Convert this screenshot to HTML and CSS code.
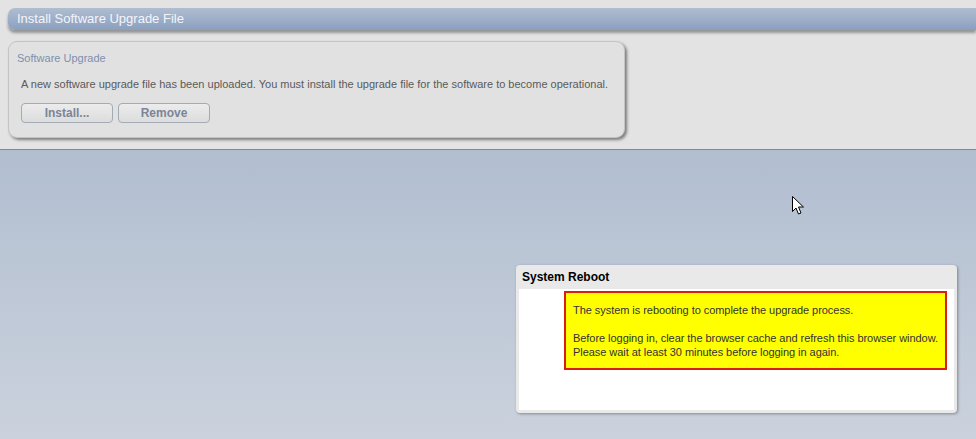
FILE: index.html
```html
<!DOCTYPE html>
<html lang="en">
<head>
    <meta charset="UTF-8">
    <title>Install Software Upgrade File</title>
    <link rel="stylesheet" href="styles.css">
</head>
<body>
    <!-- Upgrade section -->
    <section class="top-area">
        <div class="page-header">Install Software Upgrade File</div>
        <div class="panel">
            <h3 class="panel-title">Software Upgrade</h3>
            <p class="panel-text">A new software upgrade file has been uploaded. You must install the upgrade file for the software to become operational.</p>
            <div class="panel-buttons">
                <button class="btn">Install...</button>
                <button class="btn">Remove</button>
            </div>
        </div>
    </section>

    <section class="lower-area"></section>

    <!-- Reboot dialog -->
    <div class="dialog">
        <div class="dialog-title">System Reboot</div>
        <div class="dialog-body">
            <div class="notice">
                The system is rebooting to complete the upgrade process.<br><br>
                Before logging in, clear the browser cache and refresh this browser window.<br>
                Please wait at least 30 minutes before logging in again.
            </div>
        </div>
    </div>

    <svg class="cursor" width="13" height="20" viewBox="0 0 13 20">
        <path d="M0.5 0.5 L0.5 15.5 L4 12 L6.5 18 L9 17 L6.5 11 L11.5 11 Z" fill="#fff" stroke="#000" stroke-width="1"/>
    </svg>
</body>
</html>
```

FILE: styles.css
```css
/* Basic Reset */
* {
    margin: 0;
    padding: 0;
    box-sizing: border-box;
}

body {
    font-family: "Liberation Sans", Arial, sans-serif;
    width: 976px;
    height: 439px;
    overflow: hidden;
    position: relative;
}

.top-area {
    height: 150px;
    background-color: #e3e3e3;
    border-bottom: 1px solid #888;
    padding: 8px 0 0 8px;
}

.page-header {
    height: 22px;
    line-height: 22px;
    padding-left: 9px;
    font-size: 13px;
    color: #f3f5f9;
    background: linear-gradient(#b0bdd0, #8aa0c0);
    border-radius: 7px 0 0 7px;
    box-shadow: 0 3px 3px rgba(0, 0, 0, 0.35);
}

.panel {
    margin-top: 11px;
    width: 617px;
    height: 97px;
    background-color: #e1e1e1;
    border: 1px solid #c4c4c4;
    border-radius: 9px;
    box-shadow: 2px 2px 3px rgba(0, 0, 0, 0.45);
    padding: 10px 8px 0 8px;
}

.panel-title {
    font-size: 11px;
    font-weight: normal;
    color: #7d90ae;
    line-height: 13px;
}

.panel-text {
    margin-top: 13px;
    margin-left: 4px;
    font-size: 11px;
    line-height: 13px;
    color: #5a5a5a;
}

.panel-buttons {
    display: flex;
    gap: 5px;
    margin-top: 12px;
    margin-left: 4px;
}

.btn {
    width: 92px;
    height: 20px;
    font-family: "Liberation Sans", Arial, sans-serif;
    font-size: 12px;
    font-weight: bold;
    color: #7b8597;
    background: linear-gradient(#ececec, #dcdcdc);
    border: 1px solid #a3abb6;
    border-radius: 4px;
}

.lower-area {
    height: 289px;
    background: linear-gradient(#b1bed0, #cbd2dd);
}

.dialog {
    position: absolute;
    left: 516px;
    top: 265px;
    width: 441px;
    height: 148px;
    background-color: #e9e9e9;
    border-radius: 4px;
    box-shadow: 1px 1px 3px rgba(0, 0, 0, 0.35);
    padding: 0 3px 3px 3px;
    display: flex;
    flex-direction: column;
}

.dialog-title {
    height: 24px;
    line-height: 24px;
    padding-left: 3px;
    font-size: 12px;
    font-weight: bold;
    color: #000;
}

.dialog-body {
    flex: 1;
    background-color: #fff;
    padding: 2px 7px 0 45px;
}

.notice {
    background-color: #ffff00;
    border: 2px solid #d8200c;
    padding: 10px 0 9px 7px;
    font-size: 11px;
    line-height: 14px;
    letter-spacing: -0.05px;
    white-space: nowrap;
    overflow: hidden;
    color: #333;
}

.cursor {
    position: absolute;
    left: 792px;
    top: 196px;
}
```
